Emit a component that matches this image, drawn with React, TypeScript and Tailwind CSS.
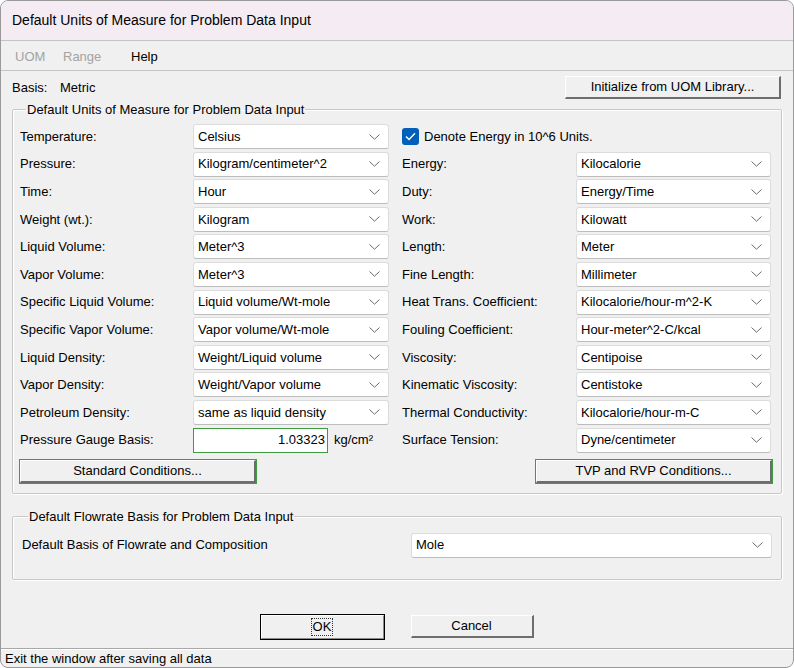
const LEFT: [string, string][] = [
  ['Temperature:', 'Celsius'],
  ['Pressure:', 'Kilogram/centimeter^2'],
  ['Time:', 'Hour'],
  ['Weight (wt.):', 'Kilogram'],
  ['Liquid Volume:', 'Meter^3'],
  ['Vapor Volume:', 'Meter^3'],
  ['Specific Liquid Volume:', 'Liquid volume/Wt-mole'],
  ['Specific Vapor Volume:', 'Vapor volume/Wt-mole'],
  ['Liquid Density:', 'Weight/Liquid volume'],
  ['Vapor Density:', 'Weight/Vapor volume'],
  ['Petroleum Density:', 'same as liquid density'],
];

const RIGHT: [string, string][] = [
  ['Energy:', 'Kilocalorie'],
  ['Duty:', 'Energy/Time'],
  ['Work:', 'Kilowatt'],
  ['Length:', 'Meter'],
  ['Fine Length:', 'Millimeter'],
  ['Heat Trans. Coefficient:', 'Kilocalorie/hour-m^2-K'],
  ['Fouling Coefficient:', 'Hour-meter^2-C/kcal'],
  ['Viscosity:', 'Centipoise'],
  ['Kinematic Viscosity:', 'Centistoke'],
  ['Thermal Conductivity:', 'Kilocalorie/hour-m-C'],
  ['Surface Tension:', 'Dyne/centimeter'],
];

function Combo({ value }: { value: string }) {
  return (
    <div className="flex h-[25px] items-center justify-between rounded-[3px] border border-[#dcdcdc] border-b-[#bcbcbc] bg-white pl-[4px] pr-[8px]">
      <span className="whitespace-nowrap">{value}</span>
      <svg width="11" height="6" viewBox="0 0 11 6" className="shrink-0">
        <path d="M0.5 0.5 L5.5 5.2 L10.5 0.5" stroke="#6b6b6b" strokeWidth="1" fill="none" />
      </svg>
    </div>
  );
}

function Bevel({ children, green, className = '' }: { children: React.ReactNode; green?: boolean; className?: string }) {
  return (
    <button
      className={`flex h-[25px] items-center justify-center bg-[#f0f0f0] ${
        green ? 'border border-[#3e9b3e]' : 'border border-transparent'
      } ${className}`}
    >
      <span className="flex h-full w-full items-center justify-center border-t border-l border-t-white border-l-white border-r-2 border-b-2 border-r-[#6d6d6d] border-b-[#6d6d6d]">
        {children}
      </span>
    </button>
  );
}

function Legend({ children }: { children: React.ReactNode }) {
  return <legend className="ml-[6px] px-[1px] leading-[15px]">{children}</legend>;
}

export default function App() {
  return (
    <div className="flex h-[668px] w-[794px] flex-col overflow-hidden rounded-[8px] border border-[#9a9a9a] bg-[#f0f0f0] font-['Liberation_Sans',Arial,sans-serif] text-[13px] text-black">
      <div className="flex h-[40px] shrink-0 items-center border-b border-[#c4c4c4] bg-[#f4ebf3] pl-[11px] text-[14px]">
        Default Units of Measure for Problem Data Input
      </div>

      <div className="flex h-[30px] shrink-0 items-center border-b border-[#c4c4c4] pl-[14px] pt-[2px]">
        <span className="w-[48px] text-[#a3a3a3]">UOM</span>
        <span className="w-[68px] text-[#a3a3a3]">Range</span>
        <span>Help</span>
      </div>

      <div className="flex flex-col pl-[11px] pr-[11px]">
        <div className="mt-[4px] flex h-[25px] items-center justify-between">
          <div className="flex pt-[1px]">
            <span className="w-[48px]">Basis:</span>
            <span>Metric</span>
          </div>
          <Bevel className="w-[218px]">Initialize from UOM Library...</Bevel>
        </div>

        <fieldset className="mt-[2px] rounded-[2px] border border-[#c8c8c8] pb-[9px] pl-[7px] pr-[9px] pt-[7px] shadow-[inset_1px_1px_0_#fff,1px_1px_0_#fff]">
          <Legend>Default Units of Measure for Problem Data Input</Legend>
          <div className="grid grid-cols-[173px_196px_13px_174px_195px] auto-rows-[25px] gap-y-[2.6px]">
            {LEFT.map(([label, value], i) => (
              <div key={label} className="contents">
                <div className="flex items-center">{label}</div>
                <Combo value={value} />
                <div />
                {i === 0 ? (
                  <div className="col-span-2 flex items-center gap-[5px]">
                    <span className="flex h-[17px] w-[17px] items-center justify-center rounded-[3px] bg-[#005fb8]">
                      <svg width="11" height="9" viewBox="0 0 11 9">
                        <path d="M1 4.6 L4 7.4 L10 1.2" stroke="#fff" strokeWidth="1.4" fill="none" />
                      </svg>
                    </span>
                    <span>Denote Energy in 10^6 Units.</span>
                  </div>
                ) : (
                  <>
                    <div className="flex items-center">{RIGHT[i - 1][0]}</div>
                    <Combo value={RIGHT[i - 1][1]} />
                  </>
                )}
              </div>
            ))}
            <div className="flex items-center">Pressure Gauge Basis:</div>
            <div className="col-span-2 flex items-center gap-[6px]">
              <div className="flex h-[25px] w-[135px] items-center justify-end border border-[#3e9b3e] bg-white pr-[2px]">
                1.03323
              </div>
              <span>kg/cm²</span>
            </div>
            <div className="flex items-center">{RIGHT[10][0]}</div>
            <Combo value={RIGHT[10][1]} />
          </div>
          <div className="mt-[6px] flex justify-between">
            <Bevel green className="ml-[-1px] w-[238px]">Standard Conditions...</Bevel>
            <Bevel green className="mr-[-1px] w-[238px]">TVP and RVP Conditions...</Bevel>
          </div>
        </fieldset>

        <fieldset className="mt-[15px] rounded-[2px] border border-[#c8c8c8] pb-[21px] pl-[9px] pr-[9px] pt-[9px] shadow-[inset_1px_1px_0_#fff,1px_1px_0_#fff]">
          <Legend>Default Flowrate Basis for Problem Data Input</Legend>
          <div className="flex items-center justify-between">
            <span>Default Basis of Flowrate and Composition</span>
            <div className="w-[361px]">
              <Combo value="Mole" />
            </div>
          </div>
        </fieldset>
      </div>

      <div className="mt-[34px] flex justify-center gap-[25px]">
        <button className="flex h-[26px] w-[125px] items-center justify-center border border-black bg-[#f0f0f0]">
          <span className="flex h-full w-full items-center justify-center border-t border-l border-t-white border-l-white border-r border-b border-r-[#8a8a8a] border-b-[#8a8a8a]">
            <span className="px-[1px] leading-[16px] outline outline-1 outline-dotted outline-[#333]">OK</span>
          </span>
        </button>
        <Bevel className="w-[125px]">Cancel</Bevel>
      </div>

      <div className="mt-[8px] flex flex-1 items-center border-t border-[#a8a8a8] pl-[4px] shadow-[inset_0_1px_0_#fff]">
        Exit the window after saving all data
      </div>
    </div>
  );
}
